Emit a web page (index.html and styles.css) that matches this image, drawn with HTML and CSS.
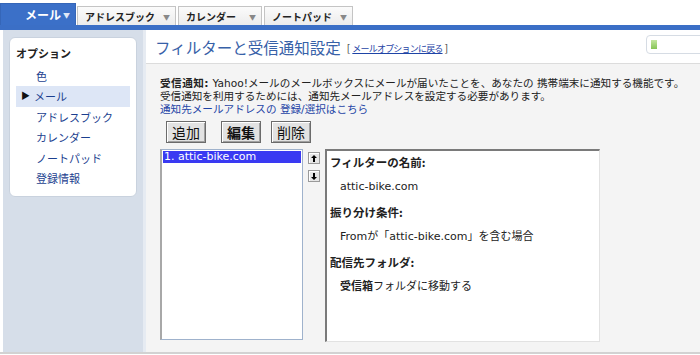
FILE: index.html
```html
<!DOCTYPE html>
<html lang="ja">
<head>
    <meta charset="UTF-8">
    <title>フィルターと受信通知設定</title>
    <link rel="stylesheet" href="styles.css">
</head>
<body>

    <!-- Onglets du haut -->
    <div class="tabs">
        <div class="tab active">メール<span class="caret">▼</span></div>
        <div class="tab tab-address">アドレスブック<span class="caret">▼</span></div>
        <div class="tab tab-calendar">カレンダー<span class="caret">▼</span></div>
        <div class="tab tab-notepad">ノートパッド<span class="caret">▼</span></div>
    </div>

    <div class="layout">
        <!-- Menu latéral -->
        <div class="sidebar">
            <div class="side-box">
                <div class="side-title">オプション</div>
                <ul class="side-menu">
                    <li>色</li>
                    <li class="current"><span class="pointer">▶</span>メール</li>
                    <li>アドレスブック</li>
                    <li>カレンダー</li>
                    <li>ノートパッド</li>
                    <li>登録情報</li>
                </ul>
            </div>
        </div>

        <!-- Contenu principal -->
        <div class="main">
            <div class="main-header">
                <h1>フィルターと受信通知設定</h1>
                <span class="back">[ <a href="#">メールオプションに戻る</a> ]</span>
                <div class="meter"><div class="meter-fill"></div></div>
            </div>

            <div class="content">
                <div class="intro">
                    <div class="intro-line"><strong>受信通知:</strong> Yahoo!メールのメールボックスにメールが届いたことを、あなたの 携帯端末に通知する機能です。</div>
                    <div class="intro-line">受信通知を利用するためには、通知先メールアドレスを設定する必要があります。</div>
                    <div class="intro-line"><a href="#">通知先メールアドレスの 登録/選択はこちら</a></div>
                </div>

                <div class="actions">
                    <button class="btn">追加</button>
                    <button class="btn">編集</button>
                    <button class="btn">削除</button>
                </div>

                <div class="filters">
                    <div class="filter-list">
                        <div class="filter-item selected">1. attic-bike.com</div>
                    </div>
                    <div class="order">
                        <span class="order-btn">
                            <svg width="6" height="7" viewBox="0 0 6 7"><path d="M3 0 L6 3 H4 V7 H2 V3 H0 Z" fill="#000"/></svg>
                        </span>
                        <span class="order-btn">
                            <svg width="6" height="7" viewBox="0 0 6 7"><path d="M3 7 L6 4 H4 V0 H2 V4 H0 Z" fill="#000"/></svg>
                        </span>
                    </div>
                    <div class="filter-detail">
                        <div class="label">フィルターの名前:</div>
                        <div class="value">attic-bike.com</div>
                        <div class="label">振り分け条件:</div>
                        <div class="value">Fromが「attic-bike.com」を含む場合</div>
                        <div class="label">配信先フォルダ:</div>
                        <div class="value"><strong>受信箱</strong>フォルダに移動する</div>
                    </div>
                </div>
            </div>
        </div>
    </div>

</body>
</html>
```

FILE: styles.css
```css
/* Base */
body {
    margin: 0;
    font-family: "DejaVu Sans", "Noto Sans CJK JP", sans-serif;
    font-size: 11px;
    color: #222;
    background-color: #ffffff;
}

a {
    color: #1e44a6;
}

/* Onglets */
.tabs {
    display: flex;
    align-items: flex-end;
    height: 22px;
    padding-top: 3px;
    border-bottom: 5px solid #3b6fc6;
}

.tab {
    position: relative;
    display: flex;
    align-items: center;
    height: 19px;
    padding-left: 7px;
    margin-right: 2px;
    background: linear-gradient(#fbfbfb, #ececec);
    border: 1px solid #c4c4c4;
    border-bottom: none;
    font-family: "Noto Sans CJK JP", sans-serif;
    font-size: 10px;
    font-weight: bold;
    color: #222;
    box-sizing: border-box;
}

.tab.active {
    width: 76px;
    height: 22px;
    padding-left: 24px;
    background: #3b70c8;
    border-color: #3566b8;
    color: #ffffff;
    font-size: 12px;
    margin-right: 1px;
}

.tab-address { width: 99px; }
.tab-calendar { width: 84px; }
.tab-notepad { width: 89px; }

.caret {
    position: absolute;
    right: 5px;
    top: 5px;
    font-size: 7px;
    color: #888;
}

.tab.active .caret {
    color: #dfe8f7;
    top: 6px;
}

/* Mise en page */
.layout {
    display: flex;
    height: 322px;
    border-bottom: 2px solid #d2d2d2;
}

.sidebar {
    width: 140px;
    margin-left: 3px;
    padding: 7px 6px 0 6px;
    box-sizing: border-box;
    background-color: #d6dee9;
}

.side-box {
    height: 160px;
    padding: 8px 6px 0 6px;
    box-sizing: border-box;
    background-color: #ffffff;
    border: 1px solid #c9d2de;
    border-radius: 6px;
}

.side-title {
    font-family: "Noto Sans CJK JP", sans-serif;
    font-weight: bold;
    font-size: 11px;
    line-height: 14px;
}

.side-menu {
    list-style: none;
    margin: 6px 0 0 0;
    padding: 0;
}

.side-menu li {
    position: relative;
    height: 20.4px;
    line-height: 20px;
    padding-left: 20px;
    font-family: "Noto Sans CJK JP", sans-serif;
    font-size: 11px;
    color: #1c3f8f;
}

.side-menu li.current {
    background-color: #dde6f6;
    padding-left: 18px;
}

.pointer {
    position: absolute;
    left: 5px;
    font-size: 9px;
    color: #111;
}

/* Contenu principal */
.main {
    flex: 1;
    display: flex;
    flex-direction: column;
    background-color: #f4f4f4;
    border-left: 3px solid #e6ebf2;
}

.main-header {
    position: relative;
    display: flex;
    align-items: center;
    height: 33px;
    padding-left: 9px;
    background-color: #ffffff;
    border-bottom: 1px solid #dcdcdc;
}

.main-header h1 {
    margin: 0 6px 0 0;
    font-family: "Noto Sans CJK JP", sans-serif;
    font-weight: normal;
    font-size: 15.5px;
    color: #3761a8;
}

.back {
    font-family: "Noto Sans CJK JP", sans-serif;
    font-size: 10px;
    color: #333;
    padding-top: 2px;
}

.back a {
    font-size: 9px;
    letter-spacing: -0.8px;
}

.meter {
    position: absolute;
    left: 500px;
    top: 5px;
    width: 60px;
    height: 17px;
    border: 1px solid #d6dce4;
    border-radius: 4px;
    background-color: #ffffff;
}

.meter-fill {
    width: 6px;
    height: 9px;
    margin: 4px 0 0 4px;
    background: linear-gradient(#c4e6a0, #86c456);
}

.content {
    padding: 13px 0 0 14px;
}

/* DejaVu en premier : boîte de ligne plus basse, le japonais passe par Noto */
.intro {
    font-family: "DejaVu Sans", "Noto Sans CJK JP", sans-serif;
    font-size: 10.6px;
    color: #222;
}

.intro-line {
    height: 13px;
    line-height: 13px;
    white-space: nowrap;
}

.intro strong {
    letter-spacing: 0.5px;
}

.intro a {
    text-decoration: none;
}

.actions {
    display: flex;
    margin: 5px 0 0 6px;
}

.btn {
    height: 22px;
    padding: 0 5px;
    margin-right: 15px;
    font-family: "Noto Sans CJK JP", sans-serif;
    font-size: 14px;
    line-height: 18px;
    color: #111;
    background-color: #e2e2e2;
    border: 1px solid #6b6b6b;
    box-shadow: inset 1px 1px 0 #ffffff, inset -1px -1px 0 #a0a0a0;
}

.btn:nth-child(2) {
    font-weight: bold;
    margin-right: 10px;
}

/* Filtres */
.filters {
    display: flex;
    margin-top: 6px;
}

.filter-list {
    width: 143px;
    height: 191px;
    padding: 1px;
    box-sizing: border-box;
    background-color: #ffffff;
    border: 1px solid #9fb2cc;
    border-left: 2px solid #a8a8a8;
}

.filter-item {
    height: 12px;
    line-height: 12px;
    padding-left: 1px;
    font-family: "DejaVu Sans", "Noto Sans CJK JP", sans-serif;
    font-size: 11px;
}

.filter-item.selected {
    background-color: #3a3af2;
    color: #ffffff;
}

.order {
    display: flex;
    flex-direction: column;
    gap: 6px;
    margin: 3px 5px 0 5px;
}

.order-btn {
    display: flex;
    align-items: center;
    justify-content: center;
    width: 10px;
    height: 10px;
    background-color: #e6e6e6;
    border: 1px solid #9a9a9a;
    box-shadow: inset 1px 1px 0 #ffffff;
}

.filter-detail {
    width: 275px;
    height: 193px;
    padding: 4px 0 0 3px;
    box-sizing: border-box;
    background-color: #ffffff;
    border: 1px solid #e2e2e2;
    border-left: 2px solid #7a7a7a;
    border-top: 2px solid #7a7a7a;
}

.label {
    height: 25px;
    line-height: 14px;
    font-family: "Noto Sans CJK JP", sans-serif;
    font-weight: bold;
    font-size: 11.5px;
    color: #222;
}

.value {
    height: 25px;
    line-height: 14px;
    padding-left: 10px;
    font-family: "DejaVu Sans", "Noto Sans CJK JP", sans-serif;
    font-size: 11px;
    color: #222;
}
```
